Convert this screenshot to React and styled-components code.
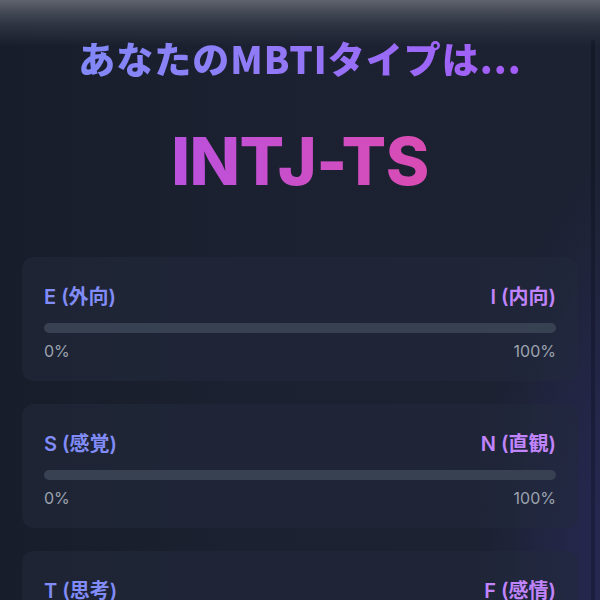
import React from "react";
import styled, { createGlobalStyle } from "styled-components";

const GlobalStyle = createGlobalStyle`
  html, body {
    margin: 0;
    padding: 0;
    overflow: hidden;
    height: 100%;
  }
  body {
    font-family: "Inter", "Noto Sans CJK JP", sans-serif;
    background:
      linear-gradient(to bottom, #5f636d 0px, #444955 12px, #2c3240 26px, rgba(27, 33, 48, 0) 46px),
      radial-gradient(ellipse 170px 420px at 650px 560px, rgba(60, 54, 150, 0.42), rgba(60, 54, 150, 0) 100%),
      linear-gradient(to right, #181d2b 0%, #1b2130 40%, #1c2232 100%);
    color: #e5e7eb;
  }
`;

const Page = styled.div`
  display: flex;
  min-height: 600px;
`;

const Main = styled.main`
  flex: 1;
  padding: 35px 13px 0 22px;
  display: flex;
  flex-direction: column;
`;

const Track = styled.div`
  width: 4px;
  margin: 40px 5px 0 0;
  background: rgba(8, 10, 24, 0.3);
`;

const Heading = styled.h1`
  margin: 0;
  text-align: center;
  font-family: "Noto Sans CJK JP", sans-serif;
  font-weight: 900;
  font-size: 37px;
  line-height: 46px;
  letter-spacing: 1px;
  background: linear-gradient(to right, #7d8cf8 0%, #8d7ff7 35%, #a855f7 100%);
  -webkit-background-clip: text;
  background-clip: text;
  color: transparent;
`;

const TypeCode = styled.div`
  margin-top: 47px;
  text-align: center;
  font-family: "Inter", sans-serif;
  font-weight: 800;
  font-size: 66px;
  line-height: 66px;
  letter-spacing: -0.5px;
  background: linear-gradient(to right, #a855f7 0%, #ec4899 100%);
  -webkit-background-clip: text;
  background-clip: text;
  color: transparent;
`;

const Cards = styled.div`
  margin-top: 63px;
  display: flex;
  flex-direction: column;
  gap: 23px;
`;

const Card = styled.section`
  background: rgba(34, 42, 60, 0.55);
  border-radius: 12px;
  padding: 26px 22px 18px;
`;

const Row = styled.div`
  display: flex;
  justify-content: space-between;
  align-items: center;
`;

const Label = styled.span`
  font-size: 20px;
  line-height: 28px;
  font-weight: 600;
  color: ${(p) => (p.$side === "right" ? "#c084fc" : "#818cf8")};
`;

const Bar = styled.div`
  margin: 12px 0 6px;
  height: 10px;
  border-radius: 5px;
  background: #374151;
  overflow: hidden;
`;

const Fill = styled.div`
  height: 100%;
  background: linear-gradient(to right, #818cf8, #c084fc);
`;

const Percent = styled.span`
  font-size: 16px;
  line-height: 24px;
  color: #9ca3af;
`;

const dims = [
  { left: "E (外向)", right: "I (内向)", value: 0 },
  { left: "S (感覚)", right: "N (直観)", value: 0 },
  { left: "T (思考)", right: "F (感情)", value: 100 },
  { left: "J (判断)", right: "P (知覚)", value: 100 },
];

export default function App() {
  return (
    <>
      <GlobalStyle />
      <Page>
        <Main>
          <Heading>あなたのMBTIタイプは...</Heading>
          <TypeCode>INTJ-TS</TypeCode>
          <Cards>
            {dims.map((d) => (
              <Card key={d.left}>
                <Row>
                  <Label $side="left">{d.left}</Label>
                  <Label $side="right">{d.right}</Label>
                </Row>
                <Bar>
                  <Fill style={{ width: `${d.value}%` }} />
                </Bar>
                <Row>
                  <Percent>{d.value}%</Percent>
                  <Percent>{100 - d.value}%</Percent>
                </Row>
              </Card>
            ))}
          </Cards>
        </Main>
        <Track />
      </Page>
    </>
  );
}
